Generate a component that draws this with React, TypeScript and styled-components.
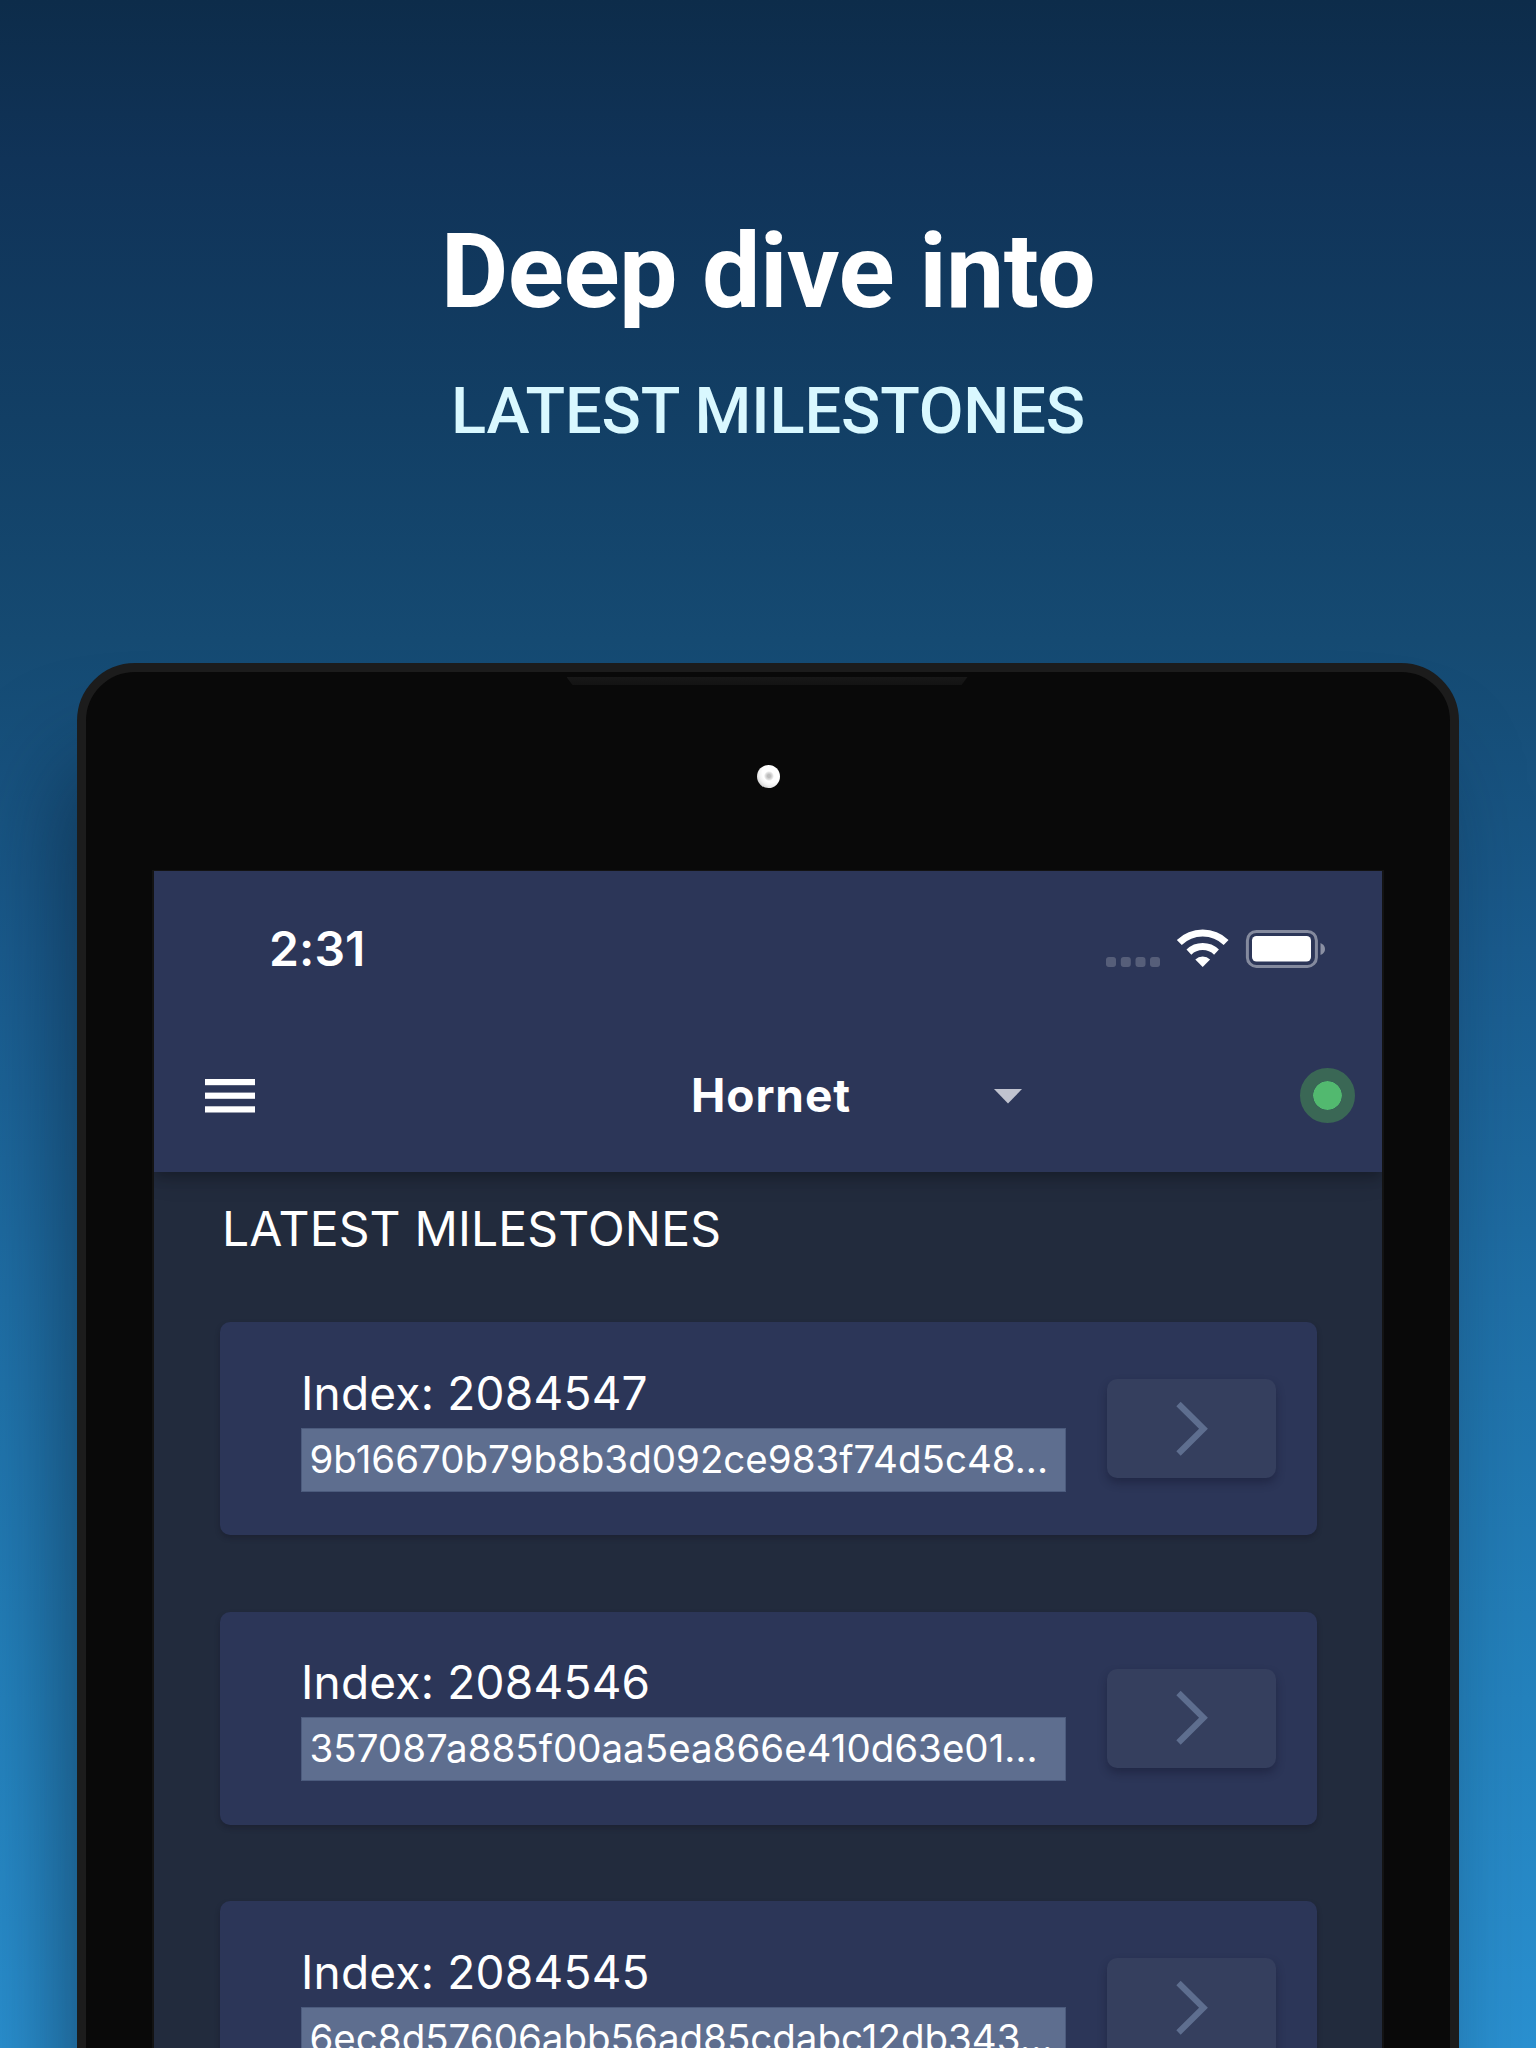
import React from "react";
import styled, { createGlobalStyle } from "styled-components";

const GlobalStyle = createGlobalStyle`
  *, *::before, *::after { box-sizing: border-box; }
  body { margin: 0; }
`;

const Poster = styled.main`
  width: 1536px;
  height: 2048px;
  overflow: hidden;
  display: flex;
  flex-direction: column;
  align-items: center;
  background: linear-gradient(180deg, #0d2c4a 0px, #103358 160px, #123f65 420px, #154a72 640px, #1a5b8d 950px, #1f6fa6 1300px, #2482bd 1700px, #2a90d0 2048px);
  font-family: Inter, "Liberation Sans", sans-serif;
  color: #fff;
`;

const Heading = styled.header`
  height: 663px;
  flex: none;
  padding-top: 211px;
  text-align: center;
  font-family: Roboto, "Liberation Sans", sans-serif;
`;

const Title = styled.h1`
  margin: 0;
  font-size: 104px;
  line-height: 122px;
  font-weight: 700;
  letter-spacing: -0.6px;
`;

const Subtitle = styled.h2`
  margin: 40px 0 0;
  font-size: 65px;
  line-height: 76px;
  font-weight: 500;
  letter-spacing: -0.17px;
  color: #d9f8ff;
`;

const Tablet = styled.section`
  position: relative;
  flex: none;
  width: 1382px;
  height: 1700px;
  padding: 0 66px;
  border: 9px solid #1c1c1c;
  border-radius: 58px;
  background: #090909;
  box-shadow: -24px 88px 95px -12px rgba(10, 30, 50, 0.58);
`;

const Bezel = styled.div`
  height: 198px;
  display: flex;
  flex-direction: column;
  align-items: center;
  padding-top: 5px;
`;

const Speaker = styled.div`
  width: 401px;
  height: 8px;
  margin-right: 2px;
  background: linear-gradient(#181818, #131313);
  clip-path: polygon(0 0, 100% 0, calc(100% - 6px) 100%, 6px 100%);
`;

const Camera = styled.div`
  width: 23px;
  height: 23px;
  margin-top: 80px;
  border-radius: 50%;
  background:
    radial-gradient(circle at 52% 48%, #bcbcbc 0 1.5px, #dedede 3.5px, transparent 5px),
    radial-gradient(circle at 65% 35%, #fff 45%, #f2f2f2 60%, #bdbdbd 90%);
`;

const Screen = styled.div`
  width: 1232px;
  height: 1500px;
  border: 1px solid #131313;
  border-width: 1px 2px 0;
  overflow: hidden;
  background: #222b3d;
`;

const AppBar = styled.div`
  position: relative;
  height: 301px;
  background: #2c3658;
  box-shadow: 0 4px 12px rgba(0, 0, 0, 0.22), 0 8px 22px rgba(0, 0, 0, 0.14);
`;

const StatusBar = styled.div`
  height: 156px;
  display: flex;
  align-items: center;
  padding: 0 57px 0 115px;
`;

const Clock = styled.time`
  flex: 1;
  font-size: 48px;
  line-height: 58px;
  font-weight: 600;
  letter-spacing: 0.1px;
`;

const StatusIcons = styled.svg`
  display: block;
  margin-bottom: 2px;
`;

const Toolbar = styled.div`
  height: 145px;
  display: grid;
  grid-template-columns: 537px 303px 1fr 82px;
  align-items: center;
  padding-bottom: 8px;
`;

const MenuButton = styled.button`
  display: flex;
  width: 150px;
  padding: 0 0 0 51px;
  border: 0;
  background: none;
`;

const NodeName = styled.div`
  font-size: 46px;
  line-height: 56px;
  margin-bottom: 2px;
  font-weight: 700;
  letter-spacing: 0.9px;
`;

const Caret = styled.svg`
  display: block;
  margin-top: 2px;
`;

const StatusDot = styled.div`
  width: 55px;
  height: 55px;
  border-radius: 50%;
  border: 13.5px solid #3a6755;
  background: #52b96f;
  background-clip: padding-box;
`;

const Content = styled.div`
  padding: 28px 65.5px 0;
`;

const SectionTitle = styled.h3`
  margin: 0 0 64px 2.5px;
  font-size: 48px;
  line-height: 58px;
  font-weight: 400;
  letter-spacing: 0.16px;
`;

const List = styled.div`
  display: grid;
  gap: 76.5px;
`;

const Card = styled.article`
  height: 213px;
  display: flex;
  align-items: center;
  padding: 0 40px 0 81.5px;
  border-radius: 10px;
  background: #2c3658;
  box-shadow: 0 3px 5px rgba(20, 20, 35, 0.35);
`;

const CardBody = styled.div`
  width: 765px;
  flex: none;
  margin-right: 41px;
`;

const IndexLine = styled.div`
  font-size: 46px;
  line-height: 54px;
  margin-bottom: 8px;
  letter-spacing: 0.22px;
  white-space: pre;
`;

const Hash = styled.div`
  height: 64px;
  padding: 2px 7.5px 0;
  border: 1px solid #4c5b7d;
  background: #5e6e8f;
  font-size: 38.5px;
  line-height: 56px;
  white-space: nowrap;
`;

const OpenButton = styled.button`
  width: 169px;
  height: 99px;
  flex: none;
  padding: 0;
  display: flex;
  align-items: center;
  justify-content: center;
  border: 0;
  border-radius: 10px;
  background: #353f5e;
  box-shadow: 0 5px 8px rgba(18, 22, 45, 0.42);
`;

const milestones = [
  { index: 2084547, hash: "9b16670b79b8b3d092ce983f74d5c48..." },
  { index: 2084546, hash: "357087a885f00aa5ea866e410d63e01..." },
  { index: 2084545, hash: "6ec8d57606abb56ad85cdabc12db343..." },
];

function SystemIcons() {
  return (
    <StatusIcons width="220" height="40" viewBox="1105 928 220 40" fill="#fff">
      <g opacity="0.2">
        <rect x="1106" y="957" width="10" height="10" rx="3" />
        <rect x="1120.8" y="957" width="10" height="10" rx="3" />
        <rect x="1135.5" y="957" width="10" height="10" rx="3" />
        <rect x="1150" y="957" width="10" height="10" rx="3" />
      </g>
      <g fill="none" stroke="#fff">
        <path d="M1179.3 942.6 A33.5 33.5 0 0 1 1226.1 942.6" strokeWidth="7" />
        <path d="M1188.9 952.1 A20 20 0 0 1 1216.5 952.1" strokeWidth="7" />
      </g>
      <path d="M1202.7 967 L1195.3 959.6 A10.5 10.5 0 0 1 1210.1 959.6 Z" />
      <rect x="1247.4" y="931.4" width="69" height="35" rx="9" fill="none" stroke="#fff" strokeOpacity="0.42" strokeWidth="3" />
      <rect x="1252" y="936" width="59" height="25.6" rx="4.5" />
      <path d="M1320.5 943 Q1325 945 1325 949 Q1325 953 1320.5 955 Z" opacity="0.45" />
    </StatusIcons>
  );
}

function MenuIcon() {
  return (
    <svg width="50" height="34" viewBox="0 0 50 34" fill="#fff">
      <rect width="50" height="6.2" />
      <rect y="13.6" width="50" height="6.2" />
      <rect y="27.3" width="50" height="6.2" />
    </svg>
  );
}

function ChevronIcon() {
  return (
    <svg width="34" height="56" viewBox="0 0 34 56">
      <path d="M3.5 3L28.5 27.7L3.5 52.5" fill="none" stroke="#5e6e8f" strokeWidth="6.2" />
    </svg>
  );
}

export default function App() {
  return (
    <>
      <GlobalStyle />
      <Poster>
        <Heading>
          <Title>Deep dive into</Title>
          <Subtitle>LATEST MILESTONES</Subtitle>
        </Heading>
        <Tablet>
          <Bezel>
            <Speaker />
            <Camera />
          </Bezel>
          <Screen>
            <AppBar>
              <StatusBar>
                <Clock>2:31</Clock>
                <SystemIcons />
              </StatusBar>
              <Toolbar>
                <MenuButton aria-label="Menu">
                  <MenuIcon />
                </MenuButton>
                <NodeName>Hornet</NodeName>
                <Caret width="28" height="15" viewBox="0 0 28 15">
                  <path d="M0 0H28L14 14.5Z" fill="#c0c3cf" />
                </Caret>
                <StatusDot />
              </Toolbar>
            </AppBar>
            <Content>
              <SectionTitle>LATEST MILESTONES</SectionTitle>
              <List>
                {milestones.map((m) => (
                  <Card key={m.index}>
                    <CardBody>
                      <IndexLine>Index: {m.index}</IndexLine>
                      <Hash>{m.hash}</Hash>
                    </CardBody>
                    <OpenButton aria-label="Open">
                      <ChevronIcon />
                    </OpenButton>
                  </Card>
                ))}
              </List>
            </Content>
          </Screen>
        </Tablet>
      </Poster>
    </>
  );
}
